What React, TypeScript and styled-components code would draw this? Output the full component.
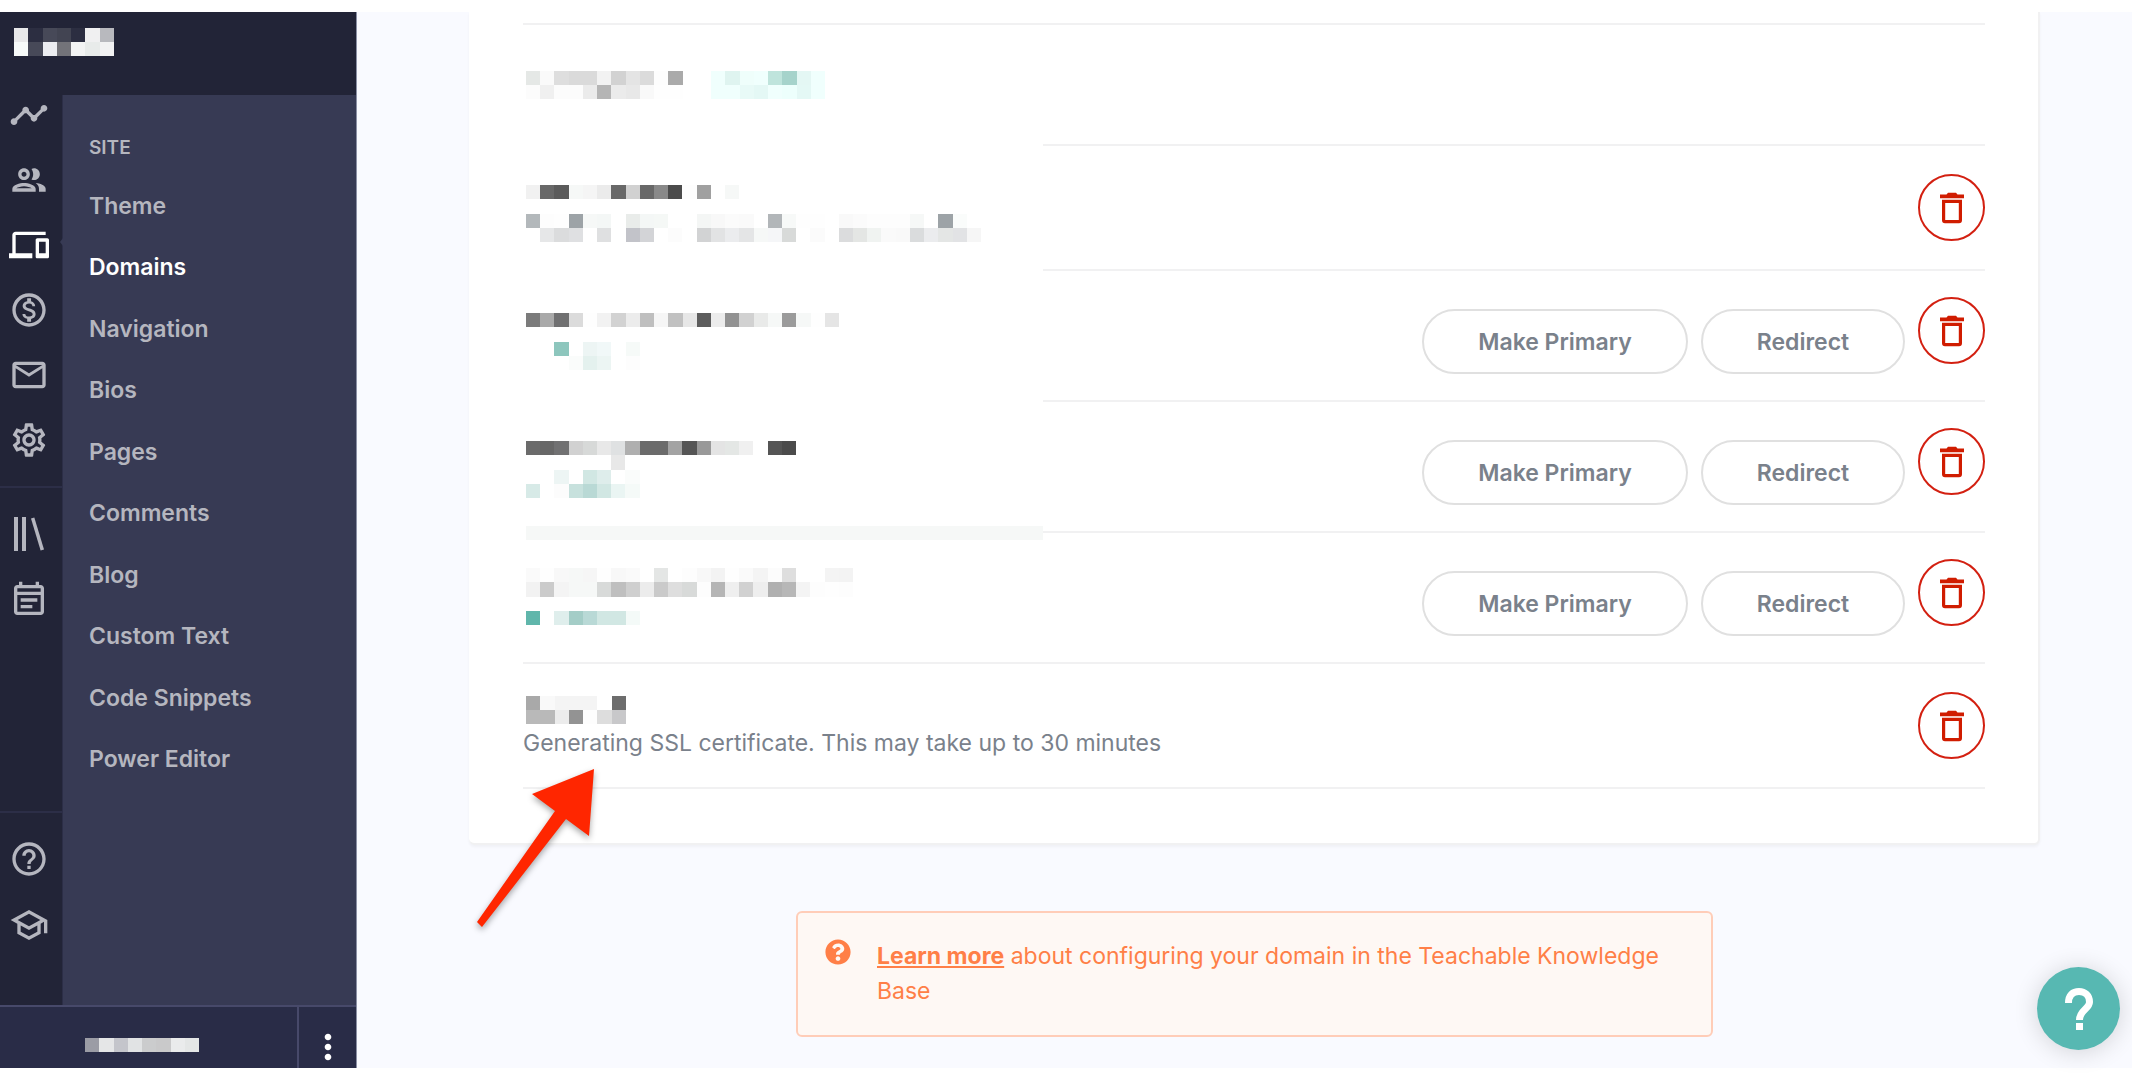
import React from "react";
import styled, { createGlobalStyle, css } from "styled-components";
import {
  MdDevices,
  MdHelpOutline,
  MdMailOutline,
  MdMoreVert,
  MdOutlineEventNote,
  MdOutlineMonetizationOn,
  MdOutlineSchool,
  MdOutlineSettings,
  MdTimeline,
} from "react-icons/md";
import { FaQuestionCircle } from "react-icons/fa";

const color = {
  ink: "#222437",
  rule: "#2c2e47",
  panel: "#373a54",
  footer: "#292c47",
  footerRule: "#47496a",
  muted: "#b5b6bf",
  page: "#f9faff",
  line: "#f1f1f2",
  text: "#7a818b",
  danger: "#d32011",
  orange: "#ff7f47",
  teal: "#57b8b2",
};

const GlobalStyle = createGlobalStyle`
  *, *::before, *::after { box-sizing: border-box; }
  body {
    margin: 0;
    background: #fff;
    font-family: Inter, "Liberation Sans", sans-serif;
    font-size: 23px;
  }
  button { font: inherit; cursor: pointer; }
`;

const Shell = styled.div`
  display: flex;
  height: 100vh;
  padding: 12px 0;
  overflow: hidden;
`;

const Sidebar = styled.aside`
  display: flex;
  flex-direction: column;
  flex: 0 0 357px;
  background: ${color.ink};
  border-right: 1px solid #8b90a5;
`;

const SchoolName = styled.header`
  height: 83px;
  padding: 16px 14px;
`;

const SidebarBody = styled.div`
  display: flex;
  flex: 1;
  min-height: 0;
`;

const Rail = styled.nav`
  display: flex;
  flex-direction: column;
  flex: 0 0 63px;
  border-right: 1px solid ${color.rule};
`;

const RailGroup = styled.div<{ $ruled?: boolean; $last?: boolean }>`
  display: flex;
  flex-direction: column;
  gap: 25px;
  padding-left: 9px;
  ${(p) =>
    p.$ruled &&
    css`
      gap: 26px;
      margin-top: 26px;
      padding-top: 26px;
      border-top: 2px solid ${color.rule};
    `}
  ${(p) =>
    p.$last &&
    css`
      margin-top: auto;
      padding-bottom: 60px;
    `}
`;

const RailLink = styled.a<{ $active?: boolean }>`
  position: relative;
  display: flex;
  width: 40px;
  height: 40px;
  font-size: 40px;
  color: ${(p) => (p.$active ? "#fff" : color.muted)};
  ${(p) =>
    p.$active &&
    css`
      &::after {
        content: "";
        position: absolute;
        top: 13px;
        left: 51px;
        border: 4px solid transparent;
        border-left: 0;
        border-right: 3px solid ${color.panel};
      }
    `}
`;

const Submenu = styled.nav`
  flex: 1;
  padding: 20px 26px;
  background: ${color.panel};
`;

const SubmenuTitle = styled.h2`
  display: flex;
  align-items: center;
  height: 60px;
  margin: 0;
  padding-top: 4px;
  font-size: 19px;
  font-weight: 600;
  color: ${color.muted};
`;

const SubmenuList = styled.ul`
  display: grid;
  grid-auto-rows: 1fr;
  height: 615px;
  margin: 0;
  padding: 0;
  list-style: none;
`;

const SubmenuLink = styled.a<{ $active?: boolean }>`
  display: flex;
  align-items: center;
  height: 100%;
  font-weight: 600;
  text-decoration: none;
  color: ${(p) => (p.$active ? "#fff" : color.muted)};
`;

const Account = styled.footer`
  display: flex;
  flex: 0 0 63px;
  overflow: hidden;
  background: ${color.footer};
  border-top: 2px solid ${color.footerRule};
`;

const AccountName = styled.div`
  display: flex;
  align-items: center;
  flex: 1;
  height: 76px;
  padding-left: 85px;
`;

const MoreButton = styled.button`
  display: flex;
  align-items: center;
  justify-content: center;
  width: 59px;
  height: 80px;
  padding: 0;
  border: 0;
  border-left: 2px solid ${color.footerRule};
  background: none;
  font-size: 40px;
  color: #fff;
`;

const Main = styled.main`
  flex: 1;
  min-width: 0;
  padding: 0 92px 0 112px;
  overflow: hidden;
  background: ${color.page};
`;

const Card = styled.section`
  padding: 11px 53px 54px 54px;
  background: #fff;
  border-right: 2px solid ${color.line};
  border-bottom: 2px solid ${color.line};
  border-radius: 0 0 6px 6px;
  box-shadow: 0 2px 3px rgba(0, 0, 0, 0.04);
`;

const DomainList = styled.ul`
  margin: 0;
  padding: 0;
  list-style: none;
  border-top: 2px solid ${color.line};
`;

const DomainRow = styled.li`
  display: flex;
`;

const DomainInfo = styled.div<{ $lead: number; $ruled?: boolean }>`
  position: relative;
  flex: 0 0 520px;
  padding-top: ${(p) => p.$lead}px;
  border-bottom: 2px solid ${(p) => (p.$ruled ? color.line : "transparent")};
`;

const DomainName = styled.div`
  padding-left: 3px;
`;

const Smudge = styled.div`
  position: absolute;
  left: 3px;
  right: 0;
  bottom: -9px;
  height: 14px;
  background: #f6f8f7;
`;

const Status = styled.p`
  margin: 4px 0 0;
  line-height: 30px;
  white-space: nowrap;
  color: ${color.text};
`;

const Actions = styled.div<{ $pad: number }>`
  display: flex;
  flex: 1;
  align-items: flex-start;
  justify-content: flex-end;
  gap: 13px;
  min-height: 121px;
  padding: ${(p) => p.$pad}px 0;
  border-bottom: 2px solid ${color.line};
`;

const PillButton = styled.button<{ $wide?: boolean }>`
  width: ${(p) => (p.$wide ? 266 : 204)}px;
  height: 65px;
  margin-top: 12px;
  border: 2px solid #e0e0e0;
  border-radius: 33px;
  background: #fff;
  font-weight: 600;
  color: ${color.text};
`;

const TrashButton = styled.button`
  display: flex;
  align-items: center;
  justify-content: center;
  width: 67px;
  height: 67px;
  padding: 0;
  border: 2px solid ${color.danger};
  border-radius: 50%;
  background: #fff;
  color: #d01c00;
`;

const Notice = styled.aside`
  display: flex;
  gap: 26px;
  max-width: 917px;
  min-height: 126px;
  margin: 66px auto 0;
  padding: 26px 27px;
  border: 2px solid #ffcdb8;
  border-radius: 6px;
  background: #fef8f4;
  color: ${color.orange};
`;

const NoticeIcon = styled(FaQuestionCircle)`
  flex: 0 0 26px;
  height: 26px;
`;

const NoticeText = styled.p`
  margin: 0;
  line-height: 35px;
`;

const NoticeLink = styled.a`
  font-weight: 700;
  color: inherit;
`;

const HelpButton = styled.button`
  position: fixed;
  right: 12px;
  bottom: 30px;
  display: flex;
  align-items: center;
  justify-content: center;
  width: 83px;
  height: 83px;
  padding: 0;
  border: 0;
  border-radius: 50%;
  background: ${color.teal};
  box-shadow: 0 2px 24px rgba(0, 0, 0, 0.16);
`;

const Pointer = styled.svg`
  position: absolute;
  left: 470px;
  top: 760px;
  overflow: visible;
  filter: drop-shadow(0 3px 3px rgba(0, 0, 0, 0.35));
`;

/* Pixelated name: one hex colour per cell, "-" for an empty cell. */
function Mosaic({ rows }: { rows: string[] }) {
  const cells = rows.map((row) => row.split(" "));
  const cols = Math.max(...cells.map((row) => row.length));
  return (
    <svg
      width={Math.round((cols * 128) / 9)}
      height={Math.round((rows.length * 128) / 9)}
      viewBox={`0 0 ${cols} ${rows.length}`}
      preserveAspectRatio="none"
      shapeRendering="crispEdges"
      display="block"
      aria-hidden="true"
    >
      {cells.map((row, y) =>
        row.map((c, x) =>
          c === "-" ? null : <rect key={`${x}-${y}`} x={x} y={y} width={1} height={1} fill={`#${c}`} />
        )
      )}
    </svg>
  );
}

function PeopleIcon() {
  return (
    <svg width="40" height="40" viewBox="0 0 24 24" fill="currentColor" aria-hidden="true">
      <path d="M9 13.75c-2.34 0-7 1.17-7 3.5V19h14v-1.75c0-2.33-4.66-3.5-7-3.5zM4.34 17c.84-.58 2.87-1.25 4.66-1.25s3.82.67 4.66 1.25H4.34zM9 12c1.93 0 3.5-1.57 3.5-3.5S10.93 5 9 5 5.5 6.57 5.5 8.5 7.07 12 9 12zm0-5c.83 0 1.5.67 1.5 1.5S9.83 10 9 10s-1.5-.67-1.5-1.5S8.17 7 9 7zm7.04 6.81c1.16.84 1.96 1.96 1.96 3.44V19h4v-1.75c0-2.02-3.5-3.17-5.96-3.44zM15 12c1.93 0 3.5-1.57 3.5-3.5S16.93 5 15 5c-.54 0-1.04.13-1.5.35.63.89 1 1.98 1 3.15s-.37 2.26-1 3.15c.46.22.96.35 1.5.35z" />
    </svg>
  );
}

function LibraryIcon() {
  return (
    <svg width="40" height="40" viewBox="0 0 40 40" fill="currentColor" aria-hidden="true">
      <rect x="5" y="3" width="4" height="34" />
      <rect x="13" y="3" width="4" height="34" />
      <path d="M22 4.5 25.3 3.5 35 35.5 31.6 36.5Z" />
    </svg>
  );
}

function TrashIcon() {
  return (
    <svg width="24" height="32" viewBox="0 0 24 32" fill="currentColor" aria-hidden="true">
      <path d="M0 2.5h6.5L8 .8h8l1.500 1.700H24v3.700H0Z" />
      <path
        fillRule="evenodd"
        d="M2 7.8h20v20.400a3 3 0 0 1-3 3H5a3 3 0 0 1-3-3ZM5.200 11v17h13.600V11Z"
      />
    </svg>
  );
}

type Domain = {
  lead: number;
  pixels: string[];
  primary?: boolean;
  trash?: boolean;
  ruled?: boolean;
  smudge?: boolean;
  status?: string;
};

const domains: Domain[] = [
  {
    lead: 46,
    pixels: [
      "e5e8e6 fafafa dedede dadada dadada f2f2f2 d2d2d2 e4e4e4 dbdbdb fdfdfd aaaaaa - - f0fffd dff4f0 effefb f0fffd bfe4dc a6d3cb e4f7f4 f0fffd",
      "fcfcfc f0f0f0 fcfcfc fcfcfc ebebeb b5b5b5 ebebeb e8e8e8 f9f9f9 fefefe fefefe - - f0fffd f0fffd e8faf7 e4f8f5 f0fffd edfffc e4f8f5 f0fffd",
    ],
  },
  {
    lead: 39,
    trash: true,
    pixels: [
      "f1f1f1 686868 5b5b5b f6f8f7 f5f5f5 ebebeb 686868 d1d1d1 686868 898989 4b4b4b fdfdfd a0a0a0 - f6f8f7",
      "-",
      "b3b8bb fdfdfd fefefe 9da3a7 f6f8f7 f4f7f6 - e9ecea f4f7f6 f5f8f6 - - f4f6f5 f8f8f8 fbfbfb fafafa - b2b6b9 f7f9f8 fefefe fefefe - f9f9f9 fbfbfb fdfdfd fdfdfd fdfdfd f6f8f7 - 9da3a7 fafcfb -",
      "- e6e7e8 dbdcdd dfe0e2 - dfe0e1 - c2c3c9 d3d4d7 - fcfcfc - d2d3d4 e2e3e4 ebecee e4e5e6 f6f8f7 f5f6f8 d8dad9 - fbfbfb - dbdcdd e4e6e4 f0f3f1 fafafa f9f9f9 dadcdd ebecee e4e6e5 e2e3e5 f6f6f6",
    ],
  },
  {
    lead: 42,
    primary: true,
    trash: true,
    pixels: [
      "7b7b7b a9a9a9 707071 dbdbdb fefefe f2f2f2 d2d2d2 ececec bfbfbf f6f6f6 c1c1c1 e7e7e7 5d5d5d ececec 929292 d1d1d1 e9eae9 f6f8f7 9b9b9b f6f8f7 fefefe e5e5e5",
      "-",
      "- - 8dc6bd - edf5f4 f1f8f8 - f6faf8",
      "- - - fafcfb e4f1ee ecf5f3 - fdfdfd",
    ],
  },
  {
    lead: 39,
    primary: true,
    trash: true,
    smudge: true,
    pixels: [
      "6b6b6b 676767 717172 d1d1d1 d7d9d8 e8e8e8 dfe1e2 afafaf 6b6b6b 6b6b6b a3a3a3 555555 999999 e4e4e4 e4e7e5 f0f0f0 - 555555 4b4b4b",
      "- - - - - - e8e8e8",
      "- - edf5f4 - d1e7e3 deedeb - fafcfb",
      "d7eae7 - fcfcfc c7e1dd b9d9d5 d1e7e3 eaf5f3 f5faf8",
    ],
  },
  {
    lead: 35,
    primary: true,
    trash: true,
    ruled: true,
    pixels: [
      "fafafa fefefe f8f8f8 f6f8f7 f6f6f6 fefefe f8f8f8 fafafa - e4e6e5 - fdfdfd f8f8f8 f3f3f3 fefefe fafafa f4f4f4 fcfcfc dedede - - f4f4f4 f3f3f3",
      "f2f2f2 cbcbcb f4f4f4 f6f8f7 f6f8f7 d8dad9 bfbfbf cfcfcf ececec cacaca dedede d8dad9 fdfdfd b5b5b5 efefef d1d1d1 eeeeee b0b0b0 b7b7b7 f4f4f4 fdfdfd fefefe fdfdfd",
      "-",
      "60b6ab - dfeeec a4cdc7 b9d9d6 d1e7e3 d1e7e3 f4faf8",
    ],
  },
  {
    lead: 32,
    trash: true,
    ruled: true,
    status: "Generating SSL certificate. This may take up to 30 minutes",
    pixels: [
      "a9a9a9 f9f9f9 f4f4f4 f4f4f4 f4f4f4 - 6d6d6d",
      "b9b9b9 b9b9b9 ececec 939393 fdfdfd dddddd c8c8ca",
    ],
  },
];

const pages = [
  "Theme",
  "Domains",
  "Navigation",
  "Bios",
  "Pages",
  "Comments",
  "Blog",
  "Custom Text",
  "Code Snippets",
  "Power Editor",
];

export default function App() {
  return (
    <>
      <GlobalStyle />
      <Shell>
        <Sidebar>
          <SchoolName>
            <Mosaic
              rows={[
                "e8e8e9 2c2e41 474958 424452 2c2e41 f0f0f1 b8b9be",
                "f7faf9 474958 ecedf1 737379 f3f4f4 e8ebea f2f2f3",
              ]}
            />
          </SchoolName>
          <SidebarBody>
            <Rail aria-label="Sections">
              <RailGroup>
                <RailLink href="#reports" aria-label="Reports"><MdTimeline /></RailLink>
                <RailLink href="#users" aria-label="Users"><PeopleIcon /></RailLink>
                <RailLink href="#site" aria-label="Site" $active><MdDevices /></RailLink>
                <RailLink href="#sales" aria-label="Sales"><MdOutlineMonetizationOn /></RailLink>
                <RailLink href="#emails" aria-label="Emails"><MdMailOutline /></RailLink>
                <RailLink href="#settings" aria-label="Settings"><MdOutlineSettings /></RailLink>
              </RailGroup>
              <RailGroup $ruled>
                <RailLink href="#courses" aria-label="Courses"><LibraryIcon /></RailLink>
                <RailLink href="#coaching" aria-label="Coaching"><MdOutlineEventNote /></RailLink>
              </RailGroup>
              <RailGroup $ruled $last>
                <RailLink href="#help" aria-label="Help"><MdHelpOutline /></RailLink>
                <RailLink href="#academy" aria-label="Academy"><MdOutlineSchool /></RailLink>
              </RailGroup>
            </Rail>
            <Submenu aria-label="Site">
              <SubmenuTitle>SITE</SubmenuTitle>
              <SubmenuList>
                {pages.map((page) => (
                  <li key={page}>
                    <SubmenuLink href="#site" $active={page === "Domains"}>{page}</SubmenuLink>
                  </li>
                ))}
              </SubmenuList>
            </Submenu>
          </SidebarBody>
          <Account>
            <AccountName>
              <Mosaic rows={["9b9ca5 e5e6e7 c4c5cb e1e3e4 cbcccd c9c9ca eaebec e4e6e6"]} />
            </AccountName>
            <MoreButton aria-label="More"><MdMoreVert /></MoreButton>
          </Account>
        </Sidebar>
        <Main>
          <Card>
            <DomainList>
              {domains.map((d, i) => (
                <DomainRow key={i}>
                  <DomainInfo $lead={d.lead} $ruled={d.ruled}>
                    <DomainName><Mosaic rows={d.pixels} /></DomainName>
                    {d.status && <Status>{d.status}</Status>}
                    {d.smudge && <Smudge />}
                  </DomainInfo>
                  <Actions $pad={d.primary ? 26 : 28}>
                    {d.primary && <PillButton $wide>Make Primary</PillButton>}
                    {d.primary && <PillButton>Redirect</PillButton>}
                    {d.trash && <TrashButton aria-label="Delete domain"><TrashIcon /></TrashButton>}
                  </Actions>
                </DomainRow>
              ))}
            </DomainList>
          </Card>
          <Notice>
            <NoticeIcon aria-hidden="true" />
            <NoticeText>
              <NoticeLink href="#knowledge-base">Learn more</NoticeLink> about configuring your domain in the Teachable Knowledge Base
            </NoticeText>
          </Notice>
        </Main>
      </Shell>
      <Pointer width="130" height="172" viewBox="0 0 130 172" fill="#ff2600" aria-hidden="true">
        <path d="M124 9 62 34 85 51 7 162 12 167 96 59 119 76Z" />
      </Pointer>
      <HelpButton aria-label="Get help">
        <svg width="32" height="46" viewBox="0 0 32 46" aria-hidden="true">
          <path
            d="M5.500 17C5.500 9 10 5.500 16 5.500S26.500 9.500 26.500 16C26.500 23 16.500 24 16.500 34"
            fill="none"
            stroke="#fff"
            strokeWidth="7"
          />
          <rect x="13" y="37" width="7" height="7" fill="#fff" />
        </svg>
      </HelpButton>
    </>
  );
}
